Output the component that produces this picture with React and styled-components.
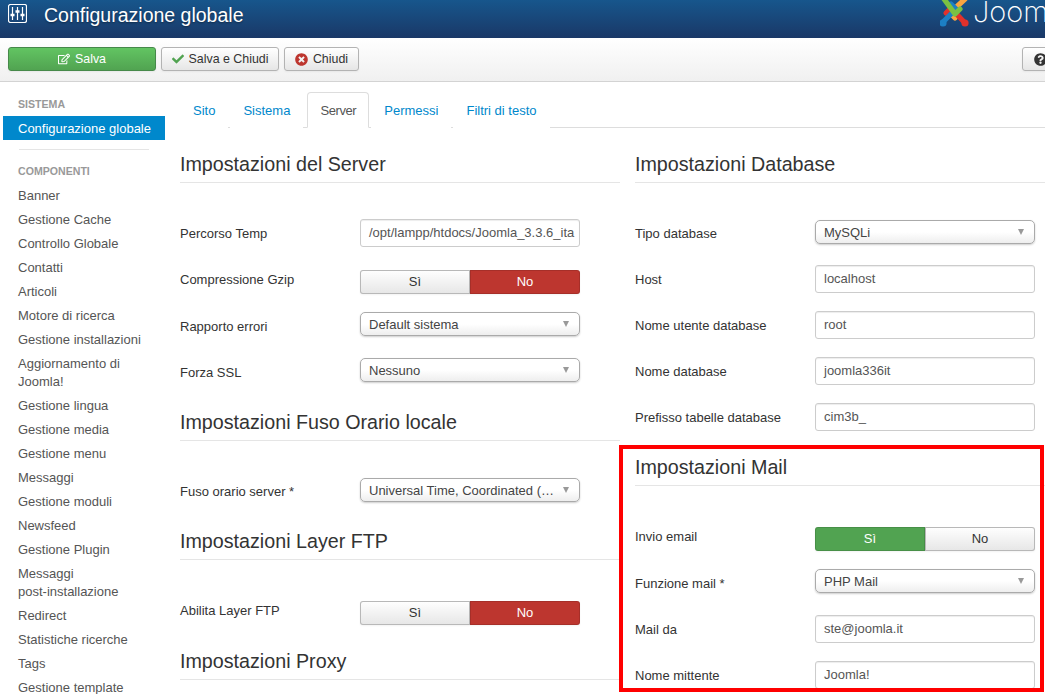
import styled, { createGlobalStyle } from 'styled-components'
import { FaCheck, FaQuestionCircle, FaTimesCircle, FaRegEdit } from 'react-icons/fa'

const GlobalStyle = createGlobalStyle`
  html, body {
    margin: 0;
    padding: 0;
    background: #fff;
    overflow: hidden;
  }
  * { box-sizing: border-box; }
`

const Page = styled.div`
  position: relative;
  width: 1045px;
  height: 694px;
  overflow: hidden;
  font-family: "Liberation Sans", Arial, sans-serif;
  font-size: 13px;
  line-height: 18px;
  color: #333;
`

const Header = styled.header`
  display: flex;
  align-items: flex-start;
  height: 38px;
  padding: 4px 0 0 8px;
  background: linear-gradient(#17568c, #1a3867);
  overflow: hidden;
`

const Title = styled.h1`
  margin: 0 0 0 17px;
  font-size: 19.5px;
  font-weight: 400;
  line-height: 22px;
  color: #fff;
  text-shadow: 0 1px 2px rgba(0, 0, 0, 0.4);
`

const Brand = styled.div`
  display: flex;
  flex: none;
  width: 105px;
  margin: -4px 0 0 auto;
  svg { flex: none; }
`

const BrandName = styled.span`
  flex: none;
  margin-top: -3px;
  font-family: Inter, sans-serif;
  font-size: 29px;
  font-weight: 200;
  line-height: 30px;
  color: #fff;
`

const Toolbar = styled.div`
  display: flex;
  gap: 5px;
  height: 44px;
  padding: 9px 0 0 8px;
  background: linear-gradient(#fff, #f0f0f0);
  border-bottom: 1px solid #d3d3d3;
  overflow: hidden;
`

const ToolButton = styled.button`
  display: flex;
  align-items: center;
  justify-content: center;
  gap: 5px;
  height: 24px;
  width: ${p => p.$width}px;
  padding: 0;
  flex: none;
  font: inherit;
  font-size: 12.4px;
  color: ${p => p.$primary ? '#fff' : '#333'};
  background: ${p => p.$primary ? 'linear-gradient(#62c462, #51a351)' : 'linear-gradient(#fff, #e6e6e6)'};
  border: 1px solid ${p => p.$primary ? '#46894a' : '#b3b3b3'};
  border-radius: 3px;
  box-shadow: 0 1px 2px rgba(0, 0, 0, 0.05);
`

const HelpButton = styled(ToolButton)`
  justify-content: flex-start;
  margin: 0 -17px 0 auto;
  padding-left: 11px;
`

const Body = styled.div`
  display: flex;
`

const Sidebar = styled.nav`
  flex: none;
  width: 165px;
  padding: 13px 0 0 3px;
`

const NavHeading = styled.div`
  margin-bottom: 3px;
  padding-left: 15px;
  font-size: 10.6px;
  font-weight: 700;
  line-height: 18px;
  color: #999;
`

const NavItem = styled.div`
  padding: 4px 8px 2px 15px;
  white-space: pre-line;
  color: ${p => p.$active ? '#fff' : '#555'};
  background: ${p => p.$active ? '#0088cc' : 'transparent'};
`

const NavDivider = styled.div`
  height: 1px;
  margin: 9px 16px 12px;
  background: #e5e5e5;
`

const Main = styled.main`
  flex: 1;
  min-width: 0;
  padding: 10px 0 0 15px;
`

const Tabs = styled.div`
  display: flex;
  gap: 2px;
  height: 36px;
  border-bottom: 1px solid #ddd;
`

const Tab = styled.div`
  height: 36px;
  margin-left: ${p => p.$active ? '2px' : '0'};
  padding: 8px 12px 0;
  line-height: 20px;
  letter-spacing: ${p => p.$active ? '-0.4px' : '0'};
  color: ${p => p.$active ? '#555' : '#08c'};
  background: #fff;
  border: 1px solid ${p => p.$active ? '#ddd' : 'transparent'};
  border-bottom-color: ${p => p.$active ? '#fff' : 'transparent'};
  border-radius: 4px 4px 0 0;
`

const Columns = styled.div`
  display: grid;
  grid-template-columns: 440px 1fr;
  column-gap: 15px;
  padding-top: 18px;
`

const Legend = styled.h2`
  height: 37px;
  margin: 0 0 36px;
  font-size: 19.7px;
  font-weight: 400;
  line-height: 36px;
  color: #333;
  border-bottom: 1px solid #e5e5e5;
`

const Row = styled.div`
  display: grid;
  grid-template-columns: 180px 220px;
  height: ${p => p.$height || 46}px;
`

const Label = styled.label`
  padding-top: 6px;
`

const TextField = styled.div`
  height: 28px;
  padding: 4px 8px;
  overflow: hidden;
  white-space: nowrap;
  color: #555;
  border: 1px solid #ccc;
  border-radius: 3px;
  box-shadow: inset 0 1px 1px rgba(0, 0, 0, 0.075);
`

const Select = styled.div`
  display: flex;
  align-items: center;
  justify-content: space-between;
  height: 24px;
  margin-top: ${p => p.$top || 0}px;
  padding: 1px 8px 0;
  color: #444;
  background: linear-gradient(#fff 50%, #eee);
  border: 1px solid #aaa;
  border-radius: 5px;
  box-shadow: 0 1px 2px rgba(0, 0, 0, 0.2);
`

const Caret = styled.i`
  flex: none;
  margin: -2px 2px 0 0;
  border-style: solid;
  border-width: 6px 3.5px 0;
  border-color: #999 transparent transparent;
`

const Toggle = styled.div`
  display: grid;
  grid-template-columns: 110px 110px;
  height: 24px;
  margin-top: 5px;
`

const ToggleOption = styled.div`
  text-align: center;
  line-height: 24px;
  color: ${p => p.$color ? '#fff' : '#333'};
  background: ${p => p.$color || 'linear-gradient(#fff, #e6e6e6)'};
  box-shadow: inset 0 0 0 1px ${p => p.$color ? 'rgba(0, 0, 0, 0.12)' : '#b8b8b8'}, 0 1px 2px rgba(0, 0, 0, 0.05);
  border-radius: ${p => p.$first ? '3px 0 0 3px' : '0 3px 3px 0'};
`

const Highlight = styled.div`
  position: absolute;
  left: 619px;
  top: 445px;
  width: 425px;
  height: 247px;
  border: 4px solid #f00;
  pointer-events: none;
`

const SlidersIcon = () => (
  <svg width="19" height="19" viewBox="0 0 19 19" fill="none" stroke="#fff">
    <rect x="0.5" y="0.5" width="18" height="18" rx="2" strokeWidth="1.2" />
    <path d="M4.5 3v13M9.5 3v13M14.5 3v13" strokeWidth="1.2" />
    <path d="M2.5 11h4M7.5 7.5h4M12.5 11h4" strokeWidth="2.6" />
  </svg>
)

const JoomlaLogo = () => (
  <svg width="33" height="38" viewBox="0 0 33 38" fill="none" strokeWidth="5.2" strokeLinecap="round" strokeLinejoin="round">
    <path d="M25 -1L10 13l5 5" stroke="#f9a541" />
    <path d="M25 23L11 8 6 13" stroke="#e0312b" />
    <path d="M2 23l14-14-5-5" stroke="#1c7fc4" />
    <path d="M4 -1l11 15 5-5" stroke="#7ac143" />
    <circle cx="25" cy="23" r="3.6" fill="#e0312b" />
    <circle cx="3" cy="23" r="3.6" fill="#1c7fc4" />
  </svg>
)

const navItems = [
  'Banner', 'Gestione Cache', 'Controllo Globale', 'Contatti', 'Articoli', 'Motore di ricerca',
  'Gestione installazioni', 'Aggiornamento di Joomla!', 'Gestione lingua', 'Gestione media',
  'Gestione menu', 'Messaggi', 'Gestione moduli', 'Newsfeed', 'Gestione Plugin',
  'Messaggi\npost-installazione', 'Redirect', 'Statistiche ricerche', 'Tags', 'Gestione template',
]

const tabs = ['Sito', 'Sistema', 'Server', 'Permessi', 'Filtri di testo']

const YesNo = ({ on }) => (
  <Toggle>
    <ToggleOption $first $color={on ? '#51a351' : undefined}>Sì</ToggleOption>
    <ToggleOption $color={on ? undefined : '#bd362f'}>No</ToggleOption>
  </Toggle>
)

const Choice = ({ value, top }) => (
  <Select $top={top}>
    {value}
    <Caret />
  </Select>
)

const App = () => {
  return (
    <Page>
      <GlobalStyle />
      <Header>
        <SlidersIcon />
        <Title>Configurazione globale</Title>
        <Brand>
          <JoomlaLogo />
          <BrandName>Joomla!</BrandName>
        </Brand>
      </Header>
      <Toolbar>
        <ToolButton $primary $width={148}><FaRegEdit size={12} />Salva</ToolButton>
        <ToolButton $width={118}><FaCheck size={12} color="#51a351" />Salva e Chiudi</ToolButton>
        <ToolButton $width={75}><FaTimesCircle size={13} color="#bd362f" />Chiudi</ToolButton>
        <HelpButton $width={40}><FaQuestionCircle size={13} color="#333" /></HelpButton>
      </Toolbar>
      <Body>
        <Sidebar>
          <NavHeading>SISTEMA</NavHeading>
          <NavItem $active>Configurazione globale</NavItem>
          <NavDivider />
          <NavHeading>COMPONENTI</NavHeading>
          {navItems.map(item => <NavItem key={item}>{item}</NavItem>)}
        </Sidebar>
        <Main>
          <Tabs>
            {tabs.map(tab => <Tab key={tab} $active={tab === 'Server'}>{tab}</Tab>)}
          </Tabs>
          <Columns>
            <section>
              <Legend>Impostazioni del Server</Legend>
              <Row><Label>Percorso Temp</Label><TextField>/opt/lampp/htdocs/Joomla_3.3.6_ita</TextField></Row>
              <Row $height={47}><Label>Compressione Gzip</Label><YesNo /></Row>
              <Row><Label>Rapporto errori</Label><Choice value="Default sistema" /></Row>
              <Row><Label>Forza SSL</Label><Choice value="Nessuno" /></Row>
              <Legend>Impostazioni Fuso Orario locale</Legend>
              <Row><Label>Fuso orario server *</Label><Choice value="Universal Time, Coordinated (…" top={1} /></Row>
              <Legend>Impostazioni Layer FTP</Legend>
              <Row $height={47}><Label>Abilita Layer FTP</Label><YesNo /></Row>
              <Legend>Impostazioni Proxy</Legend>
            </section>
            <section>
              <Legend>Impostazioni Database</Legend>
              <Row><Label>Tipo database</Label><Choice value="MySQLi" top={1} /></Row>
              <Row><Label>Host</Label><TextField>localhost</TextField></Row>
              <Row><Label>Nome utente database</Label><TextField>root</TextField></Row>
              <Row><Label>Nome database</Label><TextField>joomla336it</TextField></Row>
              <Row><Label>Prefisso tabelle database</Label><TextField>cim3b_</TextField></Row>
              <Legend>Impostazioni Mail</Legend>
              <Row $height={47}><Label>Invio email</Label><YesNo on /></Row>
              <Row><Label>Funzione mail *</Label><Choice value="PHP Mail" /></Row>
              <Row><Label>Mail da</Label><TextField>ste@joomla.it</TextField></Row>
              <Row><Label>Nome mittente</Label><TextField>Joomla!</TextField></Row>
            </section>
          </Columns>
        </Main>
      </Body>
      <Highlight />
    </Page>
  )
}

export default App
